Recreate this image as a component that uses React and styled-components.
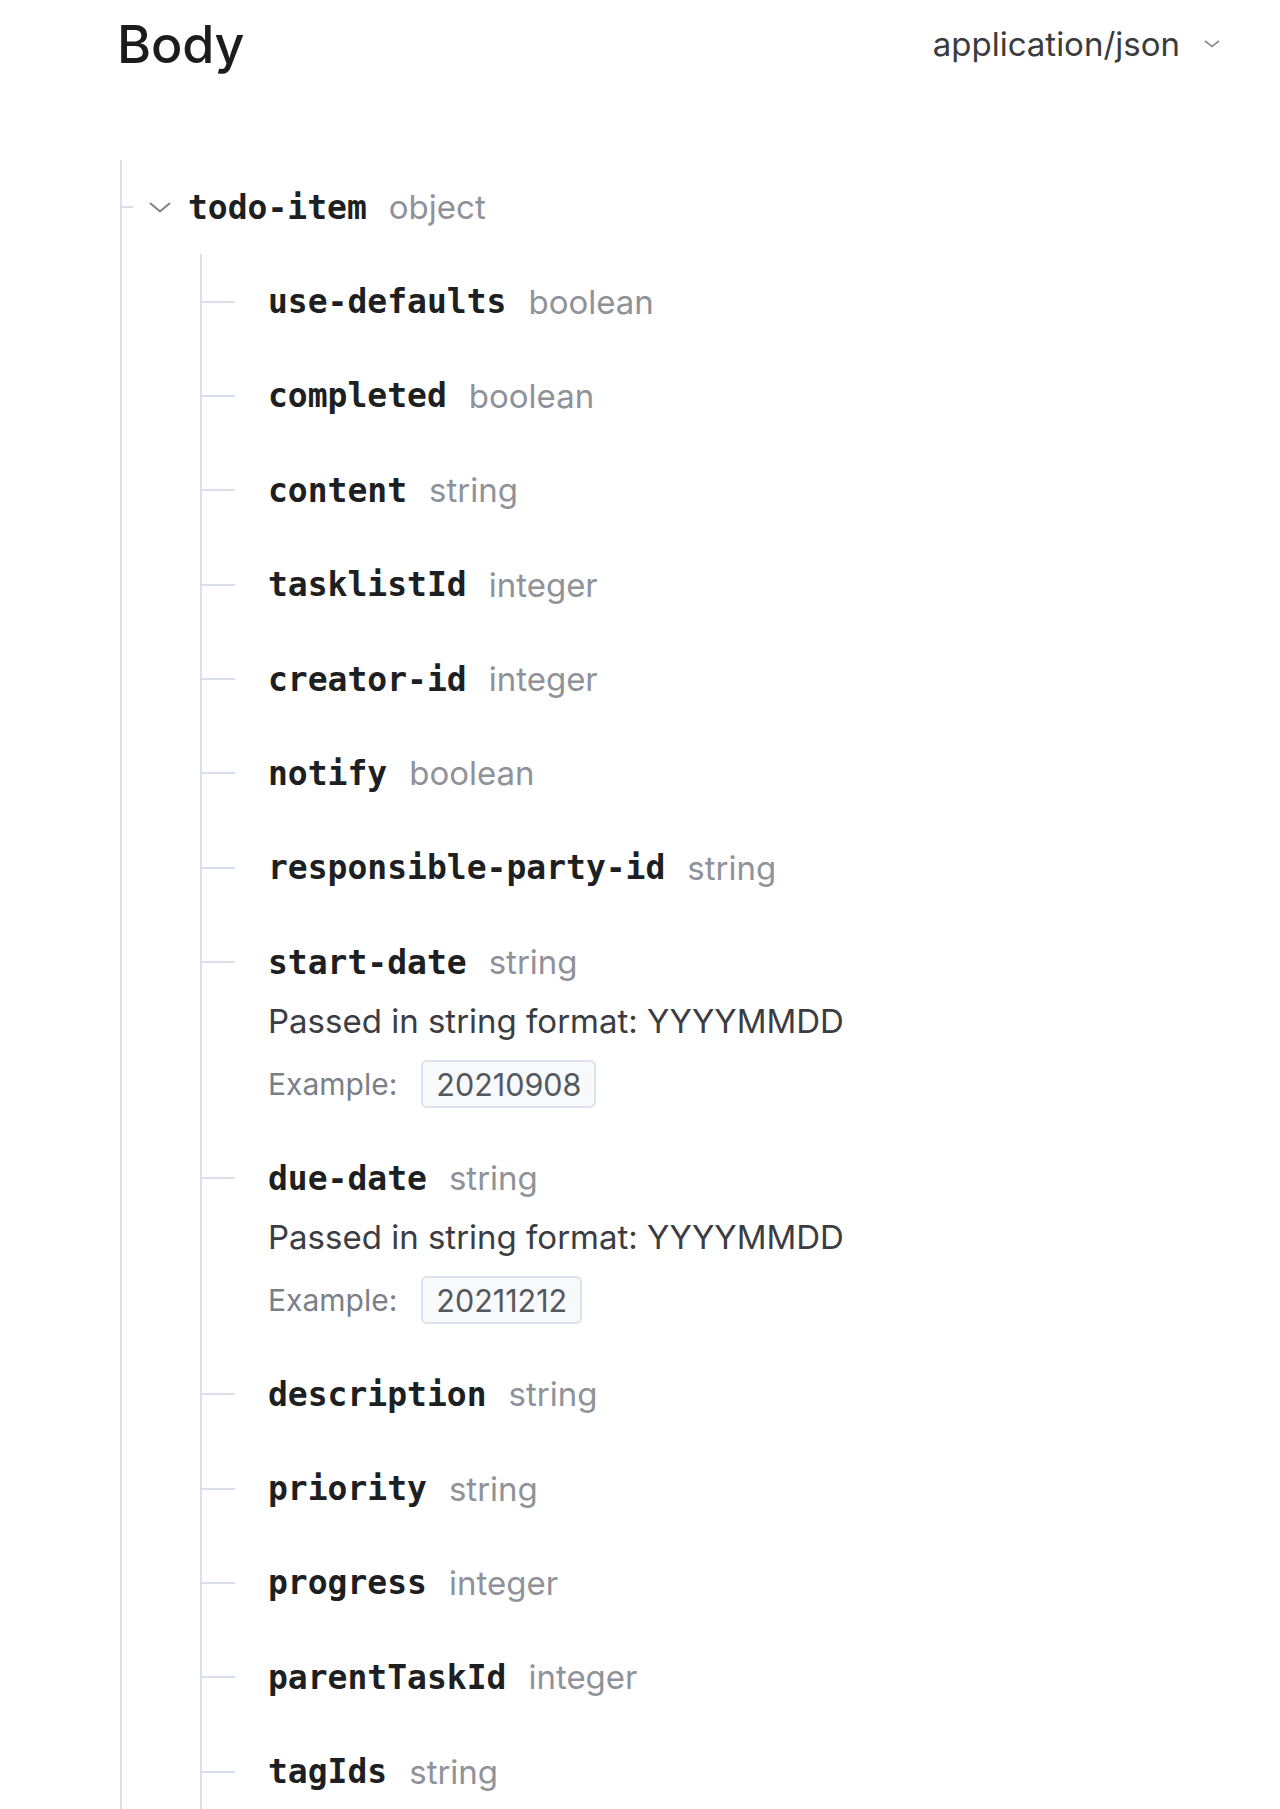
import React from 'react';
import styled, { createGlobalStyle } from 'styled-components';

const GlobalStyle = createGlobalStyle`
  html, body {
    margin: 0;
    padding: 0;
    background: #ffffff;
  }
  body {
    font-family: Inter, "Noto Sans", sans-serif;
    color: #1f2023;
  }
`;

const LINE = '#d8deea';

const Page = styled.div`
  padding: 0 60px 0 120px;
  min-height: 1809px;
  box-sizing: border-box;
  overflow: hidden;
`;

const Header = styled.div`
  height: 88px;
  display: flex;
  align-items: center;
  justify-content: space-between;
`;

const Title = styled.h3`
  margin: 0 0 0 -3px;
  font-size: 52px;
  font-weight: 500;
  letter-spacing: -0.2px;
  color: #1c1c1e;
`;

const MediaSelect = styled.div`
  display: flex;
  align-items: center;
  gap: 24px;
  font-size: 33px;
  color: #3a3b3f;
  svg {
    color: #8a8d94;
  }
`;

const Tree = styled.div`
  margin-top: 72px;
  border-left: 2px solid ${LINE};
`;

const Children = styled.div`
  margin-left: 78px;
  border-left: 2px solid ${LINE};
`;

const Row = styled.div`
  padding: 27.2px 0 ${(p) => (p.$extra ? '22.8px' : '27.2px')};
`;

const Line = styled.div`
  height: 40px;
  display: flex;
  align-items: center;
`;

const Tick = styled.span`
  flex: none;
  width: ${(p) => p.$w}px;
  height: 2px;
  background: ${LINE};
`;

const Chevron = styled.svg`
  flex: none;
  margin-left: 16px;
  margin-right: 17px;
  color: #7d8088;
`;

const Name = styled.span`
  font-family: "DejaVu Sans Mono", "Liberation Mono", monospace;
  font-weight: 700;
  font-size: 33px;
  color: #1e1f22;
  white-space: nowrap;
`;

const Type = styled.span`
  margin-left: 22px;
  font-size: 33px;
  color: #8f9299;
`;

const Details = styled.div`
  margin-left: 66px;
`;

const Description = styled.div`
  margin-top: 19px;
  height: 40px;
  line-height: 40px;
  font-size: 33px;
  color: #3b3d42;
`;

const ExampleLine = styled.div`
  margin-top: 19px;
  height: 48px;
  display: flex;
  align-items: center;
  gap: 24px;
  font-size: 30px;
  color: #7b7f87;
`;

const ExampleValue = styled.span`
  height: 48px;
  box-sizing: border-box;
  display: inline-flex;
  align-items: center;
  padding: 0 13px;
  border: 2px solid #dde2ec;
  border-radius: 6px;
  background: #f8f9fb;
  font-size: 30.5px;
  color: #55585e;
`;

const fields = [
  { name: 'use-defaults', type: 'boolean' },
  { name: 'completed', type: 'boolean' },
  { name: 'content', type: 'string' },
  { name: 'tasklistId', type: 'integer' },
  { name: 'creator-id', type: 'integer' },
  { name: 'notify', type: 'boolean' },
  { name: 'responsible-party-id', type: 'string' },
  { name: 'start-date', type: 'string', desc: 'Passed in string format: YYYYMMDD', example: '20210908' },
  { name: 'due-date', type: 'string', desc: 'Passed in string format: YYYYMMDD', example: '20211212' },
  { name: 'description', type: 'string' },
  { name: 'priority', type: 'string' },
  { name: 'progress', type: 'integer' },
  { name: 'parentTaskId', type: 'integer' },
  { name: 'tagIds', type: 'string' },
];

const Field = ({ name, type, desc, example }) => (
  <Row $extra={!!desc}>
    <Line>
      <Tick $w={33} />
      <Name style={{ marginLeft: 33 }}>{name}</Name>
      <Type>{type}</Type>
    </Line>
    {desc && (
      <Details>
        <Description>{desc}</Description>
        <ExampleLine>
          Example:
          <ExampleValue>{example}</ExampleValue>
        </ExampleLine>
      </Details>
    )}
  </Row>
);

export default function App() {
  return (
    <>
      <GlobalStyle />
      <Page>
        <Header>
          <Title>Body</Title>
          <MediaSelect>
            application/json
            <svg width="16" height="8" viewBox="0 0 16 8" fill="none">
              <polyline points="1,1 8,6.5 15,1" stroke="currentColor" strokeWidth="1.6" />
            </svg>
          </MediaSelect>
        </Header>
        <Tree>
          <Row>
            <Line>
              <Tick $w={11} />
              <Chevron width="22" height="11" viewBox="0 0 22 11" fill="none">
                <polyline points="1,1 11,9.5 21,1" stroke="currentColor" strokeWidth="2" />
              </Chevron>
              <Name>todo-item</Name>
              <Type>object</Type>
            </Line>
          </Row>
          <Children>
            {fields.map((f) => (
              <Field key={f.name} {...f} />
            ))}
          </Children>
        </Tree>
      </Page>
    </>
  );
}
